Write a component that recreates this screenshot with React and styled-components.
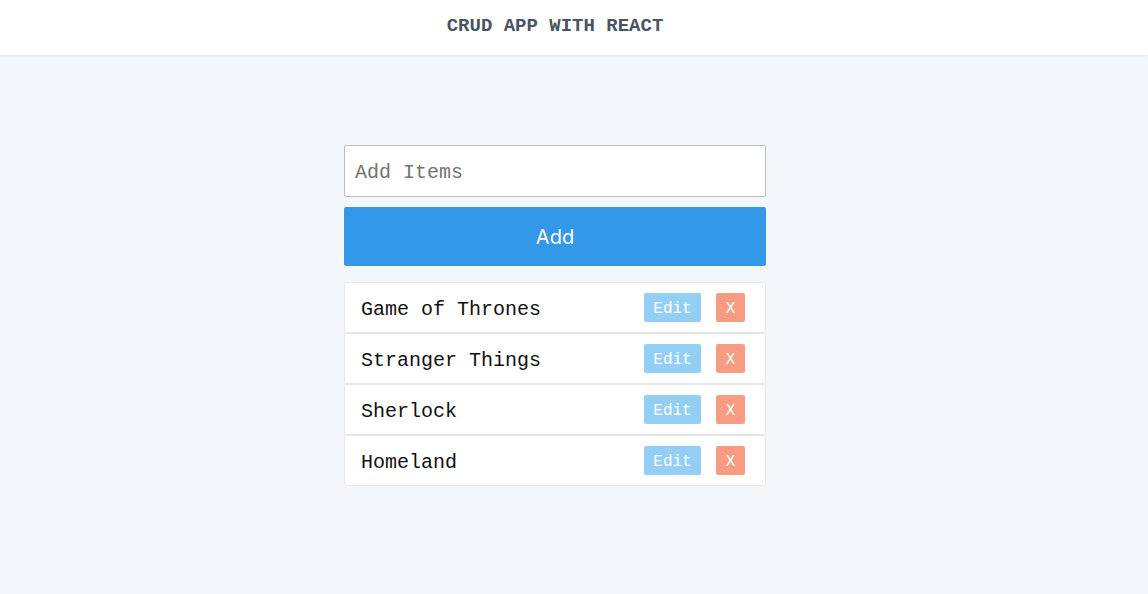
import React, { useState } from 'react';
import styled, { createGlobalStyle } from 'styled-components';

const GlobalStyle = createGlobalStyle`
  html, body {
    margin: 0;
    padding: 0;
    background: #f4f7fa;
    font-family: "Liberation Mono", "DejaVu Sans Mono", monospace;
  }
  * { box-sizing: border-box; }
`;

// the reference centres its content on a 1110px wide column
const Header = styled.header`
  height: 55px;
  background: #fff;
  display: flex;
  align-items: center;
  justify-content: center;
  padding-right: 38px;
  box-shadow: 0 1px 3px rgba(0, 0, 0, 0.08);
`;

const Title = styled.h1`
  margin: 0;
  font-size: 19px;
  font-weight: bold;
  color: #4a5461;
  padding-bottom: 4px;
`;

const Page = styled.div`
  display: flex;
  justify-content: center;
  padding-right: 38px;
`;

const Main = styled.main`
  width: 422px;
  margin-top: 90px;
  display: flex;
  flex-direction: column;
`;

const Input = styled.input`
  height: 52px;
  border: 1px solid #b9bec4;
  border-radius: 2px;
  padding: 2px 10px 0;
  font-family: inherit;
  font-size: 20px;
  color: #333;
  background: #fff;
  outline: none;
  &::placeholder { color: #77736f; }
`;

const AddButton = styled.button`
  margin-top: 10px;
  height: 59px;
  border: none;
  border-radius: 2px;
  background: #3498e8;
  color: #fff;
  font-family: "Inter", "DejaVu Sans", sans-serif;
  font-size: 20px;
  cursor: pointer;
`;

const List = styled.ul`
  list-style: none;
  margin: 16px 0 0;
  padding: 0;
`;

const Item = styled.li`
  height: 51px;
  background: #fff;
  border: 1px solid #e4e6e8;
  border-radius: 3px;
  display: flex;
  align-items: center;
  padding: 0 20px 0 16px;
`;

const Name = styled.span`
  flex: 1;
  font-size: 20px;
  color: #111;
  padding-top: 3px;
`;

const SmallButton = styled.button`
  height: 29px;
  padding: 2px 0 0;
  width: ${p => (p.$wide ? '57px' : '29px')};
  margin-left: ${p => (p.$wide ? '0' : '15px')};
  border: none;
  border-radius: 2px;
  background: ${p => p.$bg};
  color: #fff;
  font-family: inherit;
  font-size: 16px;
  cursor: pointer;
`;

const App = () => {
  const [items] = useState(['Game of Thrones', 'Stranger Things', 'Sherlock', 'Homeland']);

  return (
    <>
      <GlobalStyle />
      <Header>
        <Title>CRUD APP WITH REACT</Title>
      </Header>
      <Page>
        <Main>
          <Input placeholder="Add Items" />
          <AddButton>Add</AddButton>
          <List>
            {items.map((item, i) => (
              <Item key={i}>
                <Name>{item}</Name>
                <SmallButton $wide $bg="#93cff5">Edit</SmallButton>
                <SmallButton $bg="#f79c82">X</SmallButton>
              </Item>
            ))}
          </List>
        </Main>
      </Page>
    </>
  );
};

export default App;
